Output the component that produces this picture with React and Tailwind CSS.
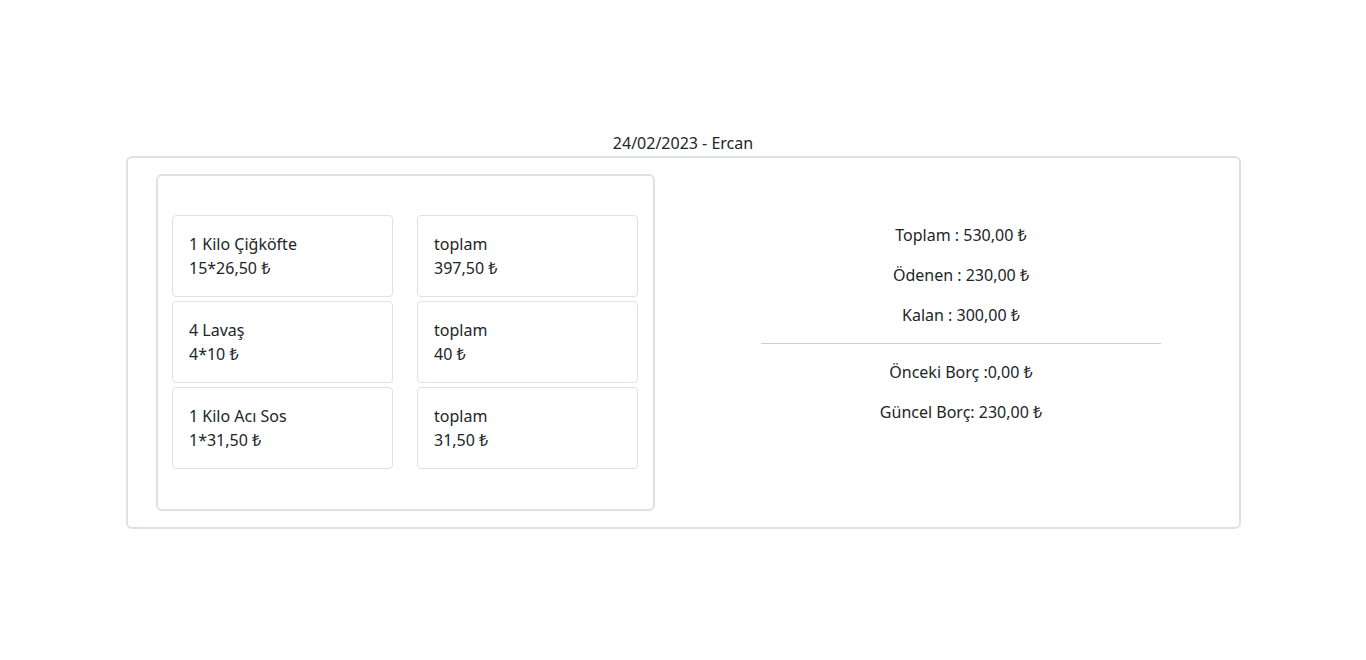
import React from 'react';

const ITEMS = [
  { name: '1 Kilo Çiğköfte', calc: '15*26,50 ₺', total: '397,50 ₺' },
  { name: '4 Lavaş', calc: '4*10 ₺', total: '40 ₺' },
  { name: '1 Kilo Acı Sos', calc: '1*31,50 ₺', total: '31,50 ₺' },
];

export default function App() {
  return (
    <div className="min-h-screen bg-white text-[#212529] text-base leading-6 pt-[131px]" style={{ fontFamily: '"Noto Sans", "Open Sans", sans-serif' }}>
      <div className="w-[1115px] ml-[126px]">
        {/* Header */}
        <p className="text-center mb-[1px] pr-[1px]">24/02/2023 - Ercan</p>

        <div className="border-2 border-[#dee2e6] rounded-md flex py-4">
          {/* Items */}
          <div className="w-[555px] pl-[28px]">
            <div className="w-[499px] border-2 border-[#dee2e6] rounded-md pl-[14px] pr-[15px] pt-[39px] pb-[40px]">
              <div className="grid grid-cols-2 gap-x-[24px] gap-y-[4px]">
                {ITEMS.map((it) => (
                  <React.Fragment key={it.name}>
                    <div className="border border-[#dee2e6] rounded p-4">
                      <p>{it.name}</p>
                      <p>{it.calc}</p>
                    </div>
                    <div className="border border-[#dee2e6] rounded p-4">
                      <p>toplam</p>
                      <p>{it.total}</p>
                    </div>
                  </React.Fragment>
                ))}
              </div>
            </div>
          </div>

          {/* Summary */}
          <div className="flex-1 pt-[49px] text-center flex flex-col items-center">
            <p className="mb-4">Toplam : 530,00 ₺</p>
            <p className="mb-4">Ödenen : 230,00 ₺</p>
            <p className="mb-4">Kalan : 300,00 ₺</p>
            <hr className="w-[400px] border-0 border-t border-[#cfcfcf] mb-4" />
            <p className="mb-4">Önceki Borç :0,00 ₺</p>
            <p className="mb-4">Güncel Borç: 230,00 ₺</p>
          </div>
        </div>
      </div>
    </div>
  );
}
